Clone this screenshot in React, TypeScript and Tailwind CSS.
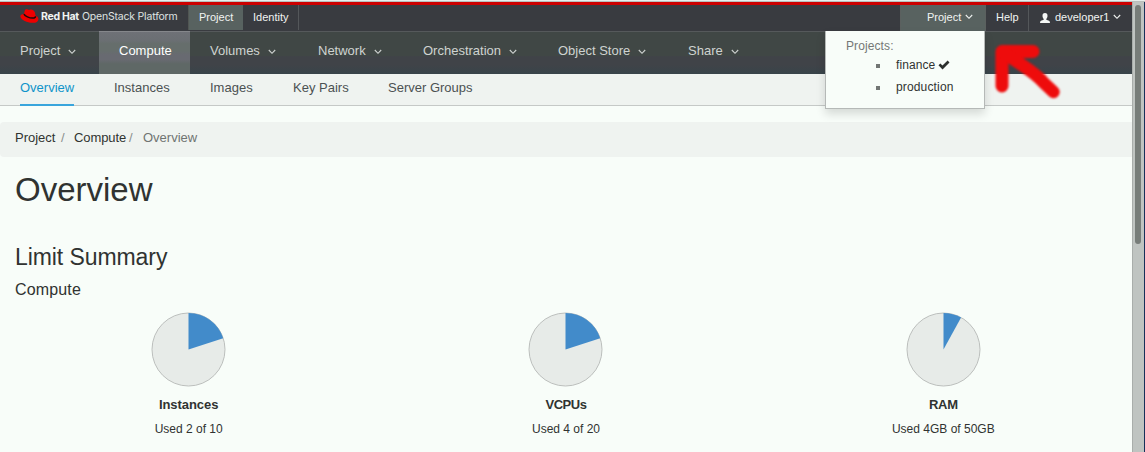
import React from "react";

function Chevron({ className = "" }: { className?: string }) {
  return (
    <svg viewBox="0 0 8 6" className={`h-[6px] w-[8px] shrink-0 ${className}`} fill="none" stroke="currentColor" strokeWidth="1.1">
      <path d="M0.8 1 L4 4.3 L7.2 1" />
    </svg>
  );
}

function Fedora() {
  return (
    <svg viewBox="0 0 19 15" className="h-[15px] w-[19px] shrink-0">
      <path
        fill="#ee0000"
        d="M4.800 1.600C5.100.5 6.200 0 7.200.3l2 .6c1-.5 2.300-.5 3.500 0 1.300.6 1.900 1.500 2.200 2.700l.7 3.100c1.700.6 2.900 1.800 2.800 3.500-.2 2.500-2.600 3.800-6 3.600C7.400 13.600.8 10.800.4 7.400.2 5.800 1.700 4.900 3.900 4.900z"
      />
      <path d="M4 5C4.600 7 9.500 9.300 13 9.100c1.400-.1 2.600-.6 2.500-1.800" fill="none" stroke="#1a0a0a" strokeWidth="1.500" />
    </svg>
  );
}

const navItems = [
  { label: "Project", width: "w-[99px]", menu: true },
  { label: "Compute", width: "w-[91px]", menu: false },
  { label: "Volumes", width: "w-[108px]", menu: true },
  { label: "Network", width: "w-[105px]", menu: true },
  { label: "Orchestration", width: "w-[135px]", menu: true },
  { label: "Object Store", width: "w-[130px]", menu: true },
  { label: "Share", width: "w-[92px]", menu: true },
];

const subItems = [
  { label: "Overview", width: "w-[94px]" },
  { label: "Instances", width: "w-[96px]" },
  { label: "Images", width: "w-[83px]" },
  { label: "Key Pairs", width: "w-[95px]" },
  { label: "Server Groups", width: "w-[90px]" },
];

const quotas = [
  { name: "Instances", used: "Used 2 of 10", share: 0.2, tracking: "tracking-[-0.05px]" },
  { name: "VCPUs", used: "Used 4 of 20", share: 0.2, tracking: "tracking-[-0.5px]" },
  { name: "RAM", used: "Used 4GB of 50GB", share: 0.08, tracking: "tracking-[-0.3px]" },
];

function Pie({ share }: { share: number }) {
  const a = share * Math.PI * 2;
  const x = 37.5 + 36.5 * Math.sin(a);
  const y = 37.5 - 36.5 * Math.cos(a);
  return (
    <svg viewBox="0 0 75 75" className="h-[75px] w-[75px]">
      <circle cx="37.5" cy="37.5" r="36.5" fill="#e7ebe8" stroke="#bcbfbd" strokeWidth="1" />
      <path d={`M37.500 37.500V1A36.500 36.500 0 0 1 ${x} ${y}Z`} fill="#428bca" />
    </svg>
  );
}

function ProjectMenu() {
  return (
    <div className="absolute top-[26px] right-0 z-10 h-[78px] w-[160px] border border-t-0 border-[#b5b9b7] bg-[#f8fdf9] pt-[7px] pl-[20px] text-[12px] leading-[16px] text-[#303331] shadow-[0_5px_9px_rgba(0,0,0,0.14)]">
      <div className="tracking-[0.1px] text-[#747876]">Projects:</div>
      <ul>
        <li className="mt-[3px] flex h-[16px] items-center">
          <span className="mt-[2px] mr-[16px] ml-[30px] size-[4px] bg-[#727674]" />
          <span className="tracking-[0.1px]">finance</span>
          <svg viewBox="0 0 12 10" className="ml-[3px] h-[10px] w-[12px]">
            <path d="M0.500 5.300L2.300 3.500 4.500 5.600 9.600 0.500 11.500 2.400 4.500 9.400Z" fill="#2c302e" />
          </svg>
        </li>
        <li className="mt-[6px] flex h-[16px] items-center">
          <span className="mt-[2px] mr-[16px] ml-[30px] size-[4px] bg-[#727674]" />
          <span className="tracking-[0.150px]">production</span>
        </li>
      </ul>
    </div>
  );
}

export default function App() {
  return (
    <div className="relative flex h-[452px] w-[1145px] overflow-hidden bg-[#f8fdf9] font-['Liberation_Sans',Arial,sans-serif] text-[#303331]">
      <div className="flex w-[1132px] shrink-0 flex-col">
        <div className="h-[2px] shrink-0 border-b border-[#b9bfbc] bg-[#e9eeeb]" />
        <div className="h-[3px] shrink-0 bg-[#cc0000]" />
        <header className="flex h-[26px] shrink-0 bg-[#393b40] text-[11px] leading-[24px] text-[#f1f4f2]">
          <div className="flex w-[188px] items-start pt-[4px] pl-[20px]">
            <Fedora />
            <div className="ml-[2px] flex gap-[3px] font-['Inter',sans-serif] text-[10.500px] leading-[15px] whitespace-nowrap">
              <span className="w-[38px] font-bold tracking-[-0.300px]">Red Hat</span>
              <span className="tracking-[-0.200px] text-[#dfe2e0]">OpenStack Platform</span>
            </div>
          </div>
          <div className="h-[25px] w-[55px] border-l border-[#515653] bg-[#586260] pl-[10px]">Project</div>
          <div className="h-[25px] w-[56px] border-r border-[#54575a] pl-[10px]">Identity</div>
          <div className="relative ml-auto flex w-[86px] items-center border-x border-[#5b605f] bg-[#586260] pl-[26px]">
            <span className="h-full">Project</span>
            <Chevron className="mt-[-2px] ml-[4px]" />
            <ProjectMenu />
          </div>
          <div className="w-[42px] pl-[10px]">Help</div>
          <div className="flex w-[104px] items-center border-l border-[#54575a] pl-[11px]">
            <svg viewBox="0 0 10 10" className="h-[10px] w-[10px]" fill="#f4f7f5">
              <path d="M5 0C6.700 0 7.700 1.200 7.500 3.200 7.300 4.700 6.700 5.500 6.300 6V6.800L9 7.800Q10 8.200 10 10H0Q0 8.200 1 7.800L3.700 6.800V6C3.300 5.500 2.700 4.700 2.500 3.200 2.300 1.200 3.300 0 5 0Z" />
            </svg>
            <span className="ml-[5px] h-full w-[53px]">developer1</span>
            <Chevron className="mt-[-2px] ml-[5px]" />
          </div>
        </header>
        <nav className="flex h-[43px] shrink-0 border-t border-[#55595b] bg-[linear-gradient(#404745_0%,#404745_56%,#404348_59%,#404348_78%,#38444a_100%)] text-[13px] leading-[38px] text-[#cfd3d1]">
          {navItems.map((item) =>
            item.menu ? (
              <div key={item.label} className={`flex items-center pl-[20px] whitespace-nowrap ${item.width}`}>
                <span className="h-full">{item.label}</span>
                <Chevron className="mt-[-3px] ml-[8px]" />
              </div>
            ) : (
              <div
                key={item.label}
                className={`mt-[-1px] border-t border-[#85878b] bg-[linear-gradient(#6f7177_0%,#6b6f73_20%,#666e6c_28%,#666e6c_45%,#686a71_54%,#686a71_66%,#5f6866_76%,#5f6866_100%)] pl-[20px] text-white ${item.width}`}
              >
                {item.label}
              </div>
            ),
          )}
        </nav>
        <nav className="flex h-[32px] shrink-0 border-b border-[#c5c9c7] bg-[#eff3f0] pl-[20px] text-[13px] leading-[28px] text-[#4b5152]">
          {subItems.map((item, i) => (
            <div key={item.label} className={`whitespace-nowrap ${item.width}`}>
              {i === 0 ? (
                <span className="inline-block h-[32px] border-b-2 border-[#39a5dc] text-[#0f94ca]">{item.label}</span>
              ) : (
                item.label
              )}
            </div>
          ))}
        </nav>
        <div className="mt-[16px] flex h-[35px] shrink-0 rounded-l-[4px] bg-[#eff3f0] pl-[15px] text-[13px] leading-[32px]">
          <span className="w-[41px]">Project</span>
          <span className="ml-[5px] w-[13px] text-[#8b8f8d]">/</span>
          <span className="w-[51px] tracking-[-0.100px]">Compute</span>
          <span className="ml-[4px] w-[14px] text-[#8b8f8d]">/</span>
          <span className="text-[#707472]">Overview</span>
        </div>
        <main>
          <h1 className="mt-[13px] pl-[15px] text-[33px] leading-[40px]">Overview</h1>
          <h2 className="mt-[32px] pl-[15px] text-[23px] leading-[30px] tracking-[-0.080px]">Limit Summary</h2>
          <h3 className="mt-[8px] pl-[15px] text-[16px] leading-[20px] tracking-[0.150px]">Compute</h3>
          <div className="mt-[12px] grid grid-cols-3">
            {quotas.map((q) => (
              <div key={q.name} className="flex flex-col items-center">
                <Pie share={q.share} />
                <div className={`mt-[8px] text-[13px] leading-[20px] font-bold ${q.tracking}`}>{q.name}</div>
                <div className="mt-[4px] text-[12px] leading-[20px]">{q.used}</div>
              </div>
            ))}
          </div>
        </main>
      </div>
      <div className="flex flex-1 flex-col">
        <div className="h-[2px] shrink-0 border-b border-[#b9bfbc] bg-[#e9eeeb]" />
        <div className="flex flex-1 border-r border-l border-r-[#16305a] border-l-[#a9aeab] bg-[#bfc4c1] pt-[3px] pl-[2px]">
          <div className="h-[239px] w-[6px] rounded-full bg-[#777d79]" />
        </div>
      </div>
      <svg viewBox="0 0 80 70" className="absolute top-[35px] left-[985px] z-20 h-[70px] w-[80px] blur-[1px]" fill="none" stroke="#ee0c0c" strokeLinecap="round" strokeLinejoin="round">
        <path d="M17 51V16.500H48" strokeWidth="13" />
        <path d="M18 17L37 30C46 36 54 42 59 48L68.500 57" strokeWidth="12.500" />
      </svg>
    </div>
  );
}
